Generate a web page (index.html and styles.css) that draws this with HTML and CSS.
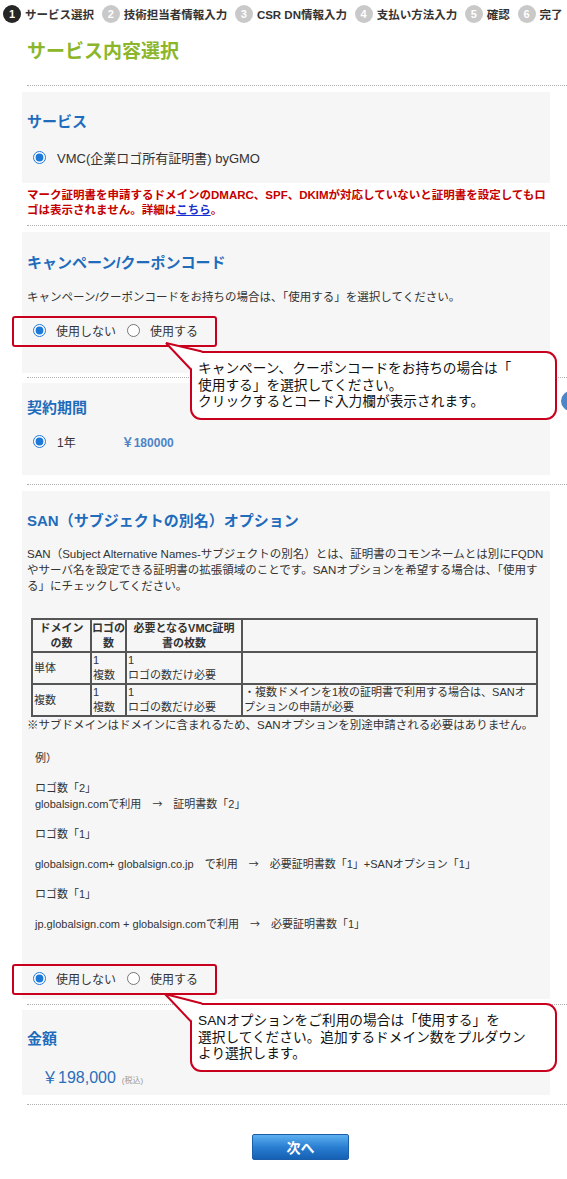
FILE: index.html
```html
<!DOCTYPE html>
<html lang="ja">
<head>
<meta charset="utf-8">
<title>サービス内容選択</title>
<link rel="stylesheet" href="styles.css">
</head>
<body>
<div class="page">
  <div class="steps">
    <div class="step active"><span class="num">1</span><span class="lbl">サービス選択</span></div>
    <div class="step"><span class="num">2</span><span class="lbl">技術担当者情報入力</span></div>
    <div class="step"><span class="num">3</span><span class="lbl">CSR DN情報入力</span></div>
    <div class="step"><span class="num">4</span><span class="lbl">支払い方法入力</span></div>
    <div class="step"><span class="num">5</span><span class="lbl">確認</span></div>
    <div class="step"><span class="num">6</span><span class="lbl">完了</span></div>
  </div>

  <h1 class="page-title">サービス内容選択</h1>

  <div class="main">
    <div class="dots first"></div>

    <section class="box box-service">
      <h2>サービス</h2>
      <label class="radio-row"><input type="radio" name="svc" checked><span>VMC(企業ロゴ所有証明書) byGMO</span></label>
    </section>
    <p class="warn">マーク証明書を申請するドメインのDMARC、SPF、DKIMが対応していないと証明書を設定してもロゴは表示されません。詳細は<a href="#">こちら</a>。</p>

    <div class="dots d2"></div>

    <section class="box box-campaign">
      <h2>キャンペーン/クーポンコード</h2>
      <p class="desc">キャンペーン/クーポンコードをお持ちの場合は、「使用する」を選択してください。</p>
      <div class="opt-group og1">
        <label><input type="radio" name="cp" checked><span>使用しない</span></label>
        <label><input type="radio" name="cp"><span>使用する</span></label>
        <svg class="tail" width="200" height="60" viewBox="0 0 200 60">
          <polygon points="133,23 158,49 169,32" fill="#fff"/>
          <line x1="133" y1="23" x2="157.5" y2="49" stroke="#c8001e" stroke-width="2"/>
          <line x1="133" y1="23" x2="169" y2="31.5" stroke="#c8001e" stroke-width="2"/>
        </svg>
        <div class="callout c1">キャンペーン、クーポンコードをお持ちの場合は「<br>使用する」を選択してください。<br>クリックするとコード入力欄が表示されます。</div>
      </div>
    </section>

    <div class="dots d3"></div>

    <section class="box box-term">
      <h2>契約期間</h2>
      <label class="radio-row term"><input type="radio" name="term" checked><span class="yr">1年</span><span class="yen">￥180000</span></label>
      <span class="edge-dot"></span>
    </section>

    <div class="dots d4"></div>

    <section class="box box-san">
      <h2>SAN（サブジェクトの別名）オプション</h2>
      <p class="desc san-desc">SAN（Subject Alternative Names-サブジェクトの別名）とは、証明書のコモンネームとは別にFQDNやサーバ名を設定できる証明書の拡張領域のことです。SANオプションを希望する場合は、「使用する」にチェックしてください。</p>
      <table class="san-table">
        <colgroup><col class="c-a"><col class="c-b"><col class="c-c"><col class="c-d"></colgroup>
        <tr class="hd"><th>ドメイン<br>の数</th><th>ロゴの<br>数</th><th>必要となるVMC証明<br>書の枚数</th><th></th></tr>
        <tr class="r1"><td>単体</td><td>1<br>複数</td><td>1<br>ロゴの数だけ必要</td><td></td></tr>
        <tr class="r2"><td>複数</td><td>1<br>複数</td><td>1<br>ロゴの数だけ必要</td><td>・複数ドメインを1枚の証明書で利用する場合は、SANオプションの申請が必要</td></tr>
      </table>
      <p class="note">※サブドメインはドメインに含まれるため、SANオプションを別途申請される必要はありません。</p>
      <div class="examples">
        <p class="ex-head">例）</p>
        <p>ロゴ数「2」<br>globalsign.comで利用　<span class="arr">→</span>　証明書数「2」</p>
        <p>ロゴ数「1」</p>
        <p>globalsign.com+ globalsign.co.jp　で利用　<span class="arr">→</span>　必要証明書数「1」+SANオプション「1」</p>
        <p>ロゴ数「1」</p>
        <p>jp.globalsign.com + globalsign.comで利用　<span class="arr">→</span>　必要証明書数「1」</p>
      </div>
      <div class="opt-group og2">
        <label><input type="radio" name="san" checked><span>使用しない</span></label>
        <label><input type="radio" name="san"><span>使用する</span></label>
        <svg class="tail" width="200" height="60" viewBox="0 0 200 60">
          <polygon points="132,26 158,53 169,36" fill="#fff"/>
          <line x1="132" y1="26" x2="157.5" y2="53" stroke="#c8001e" stroke-width="2"/>
          <line x1="132" y1="26" x2="169" y2="35.5" stroke="#c8001e" stroke-width="2"/>
        </svg>
        <div class="callout c2">SANオプションをご利用の場合は「使用する」を<br>選択してください。追加するドメイン数をプルダウン<br>より選択します。</div>
      </div>
    </section>

    <div class="dots d5"></div>

    <section class="box box-price">
      <h2>金額</h2>
      <p class="price"><span class="amt">￥198,000</span><span class="tax">(税込)</span></p>
    </section>

    <div class="dots d6"></div>

    <button class="next-btn" type="button">次へ</button>
  </div>
</div>
</body>
</html>
```

FILE: styles.css
```css
* { box-sizing: border-box; }
html, body { overflow: hidden; }
body {
  margin: 0;
  width: 567px;
  background: #fff;
  color: #333;
  font-family: "Liberation Sans", "Noto Sans CJK JP", sans-serif;
}
.page { position: relative; width: 567px; height: 1179px; }

/* steps */
.steps {
  display: flex;
  align-items: center;
  height: 24px;
  padding: 3px 0 0 3px;
  font-size: 11.5px;
  font-weight: bold;
  white-space: nowrap;
  color: #333;
}
.step { display: flex; align-items: center; margin-right: 7.7px; }
.step .num {
  width: 18px; height: 18px;
  border-radius: 50%;
  background: #c9c9c9;
  color: #fff;
  font-size: 11px;
  display: flex; align-items: center; justify-content: center;
  margin-right: 4px;
}
.step.active .num { background: #262626; }

.page-title {
  margin: 15px 0 0 27px;
  font-size: 19px;
  line-height: 26px;
  color: #8cb62a;
  font-weight: bold;
}

.main { padding-left: 22px; }

.dots { height: 0; border-top: 1px dotted #b0b0b0; margin-left: 5px; }
.dots.first { margin-top: 20px; }
.dots.d2 { margin-top: 7px; }
.dots.d3 { margin-top: 4px; }
.dots.d4 { margin-top: 9px; }
.dots.d5 { margin-top: 5px; }
.dots.d6 { margin-top: 9px; }

.box {
  position: relative;
  width: 528px;
  background: #f6f6f6;
  padding: 20px 0 16px 5px;
  margin-top: 6px;
}
.box h2 {
  margin: 0;
  font-size: 15px;
  line-height: 20px;
  color: #1f6cbd;
  font-weight: bold;
}
.desc {
  margin: 16px 0 0;
  font-size: 11.5px;
  line-height: 16px;
  color: #333;
}

.radio-row {
  display: flex;
  align-items: center;
  height: 20px;
  margin-top: 15px;
  padding-left: 6px;
  font-size: 13px;
  color: #333;
}
input[type="radio"] {
  width: 13px; height: 13px;
  margin: 0 10px 0 0;
  accent-color: #1e78d7;
}
.radio-row input { margin-right: 11px; }

.warn {
  width: 525px;
  margin: 5px 0 0 5px;
  font-size: 11.5px;
  line-height: 15px;
  font-weight: bold;
  color: #c40000;
}
.warn a { color: #1a2fd0; text-decoration: underline; }

/* campaign */
.box-campaign { padding: 21px 0 33px 5px; }
.opt-group {
  position: relative;
  display: flex;
  align-items: center;
  height: 20px;
  margin: 15px 0 0 6px;
  font-size: 12px;
  color: #333;
}
.opt-group label { display: flex; align-items: center; margin-right: 11px; }
.opt-group::before {
  content: "";
  position: absolute;
  left: -21px; top: -4px;
  width: 201px; height: 27px;
  border: 2px solid #c8001e;
  border-radius: 3px;
}
.tail { position: absolute; left: 0; top: 0; overflow: visible; z-index: 3; }
.callout {
  position: absolute;
  left: 157px;
  width: 367px;
  height: 69px;
  z-index: 2;
  background: #fff;
  border: 2px solid #c8001e;
  border-radius: 11px;
  padding: 8px 0 0 6px;
  font-size: 13.7px;
  line-height: 16.5px;
  color: #111;
  white-space: nowrap;
}
.c1 { top: 31px; }
.c2 { top: 35px; }

/* term */
.box-term { padding: 15px 0 24px 5px; margin-top: 5px; }
.term { margin-top: 13px; font-size: 12px; }
.yr { color: #333; }
.yen { margin-left: 46px; color: #4d84c6; font-weight: bold; }
.edge-dot {
  position: absolute;
  left: 539px; top: 8px;
  width: 20px; height: 20px;
  border-radius: 50%;
  background: #4a86c8;
}

/* san */
.box-san { padding: 20px 0 11px 5px; }
.san-desc { margin-top: 15px; }
.san-table {
  margin: 24px 0 0 4px;
  width: 505px;
  table-layout: fixed;
  border: 1px solid #555;
  border-spacing: 0;
  background: #f6f6f6;
  font-size: 11px;
  line-height: 15px;
  color: #333;
}
.c-a { width: 59px; }
.c-b { width: 35px; }
.c-c { width: 116px; }
.c-d { width: 295px; }
.san-table th, .san-table td {
  border: 1px solid #555;
  padding: 0 1px;
  vertical-align: middle;
  text-align: left;
  font-weight: normal;
}
.san-table th {
  font-weight: bold;
  text-align: center;
  padding: 1px 0 0;
  font-size: 11px;
  white-space: nowrap;
  overflow: visible;
}
.san-table td:nth-child(2), .san-table td:nth-child(3) { vertical-align: top; }
.note {
  margin: 0;
  font-size: 11.5px;
  line-height: 16px;
}
.examples { padding-left: 8px; font-size: 11px; line-height: 16px; }
.examples p { margin: 14px 0 0; }
.examples .ex-head { margin-top: 17px; }
.arr { font-family: "Noto Sans CJK JP", sans-serif; font-size: 10px; }
.og2 { margin-top: 36px; }

/* price */
.box-price { padding: 19px 0 4px 5px; margin-top: 5px; }
.price { margin: 19px 0 0 15px; line-height: 20px; }
.amt { font-size: 16px; color: #2a6ebb; }
.tax { font-size: 8px; color: #999; margin-left: 6px; }

.next-btn {
  display: block;
  margin: 29px 0 0 230px;
  width: 97px;
  height: 26px;
  border: 1px solid #1d5ea8;
  border-radius: 2px;
  background: linear-gradient(#5cb0f0, #2a7fd2 50%, #1460b4);
  color: #fff;
  font-family: "Noto Sans CJK JP", sans-serif;
  font-weight: bold;
  font-size: 14px;
  padding: 0;
}
```
